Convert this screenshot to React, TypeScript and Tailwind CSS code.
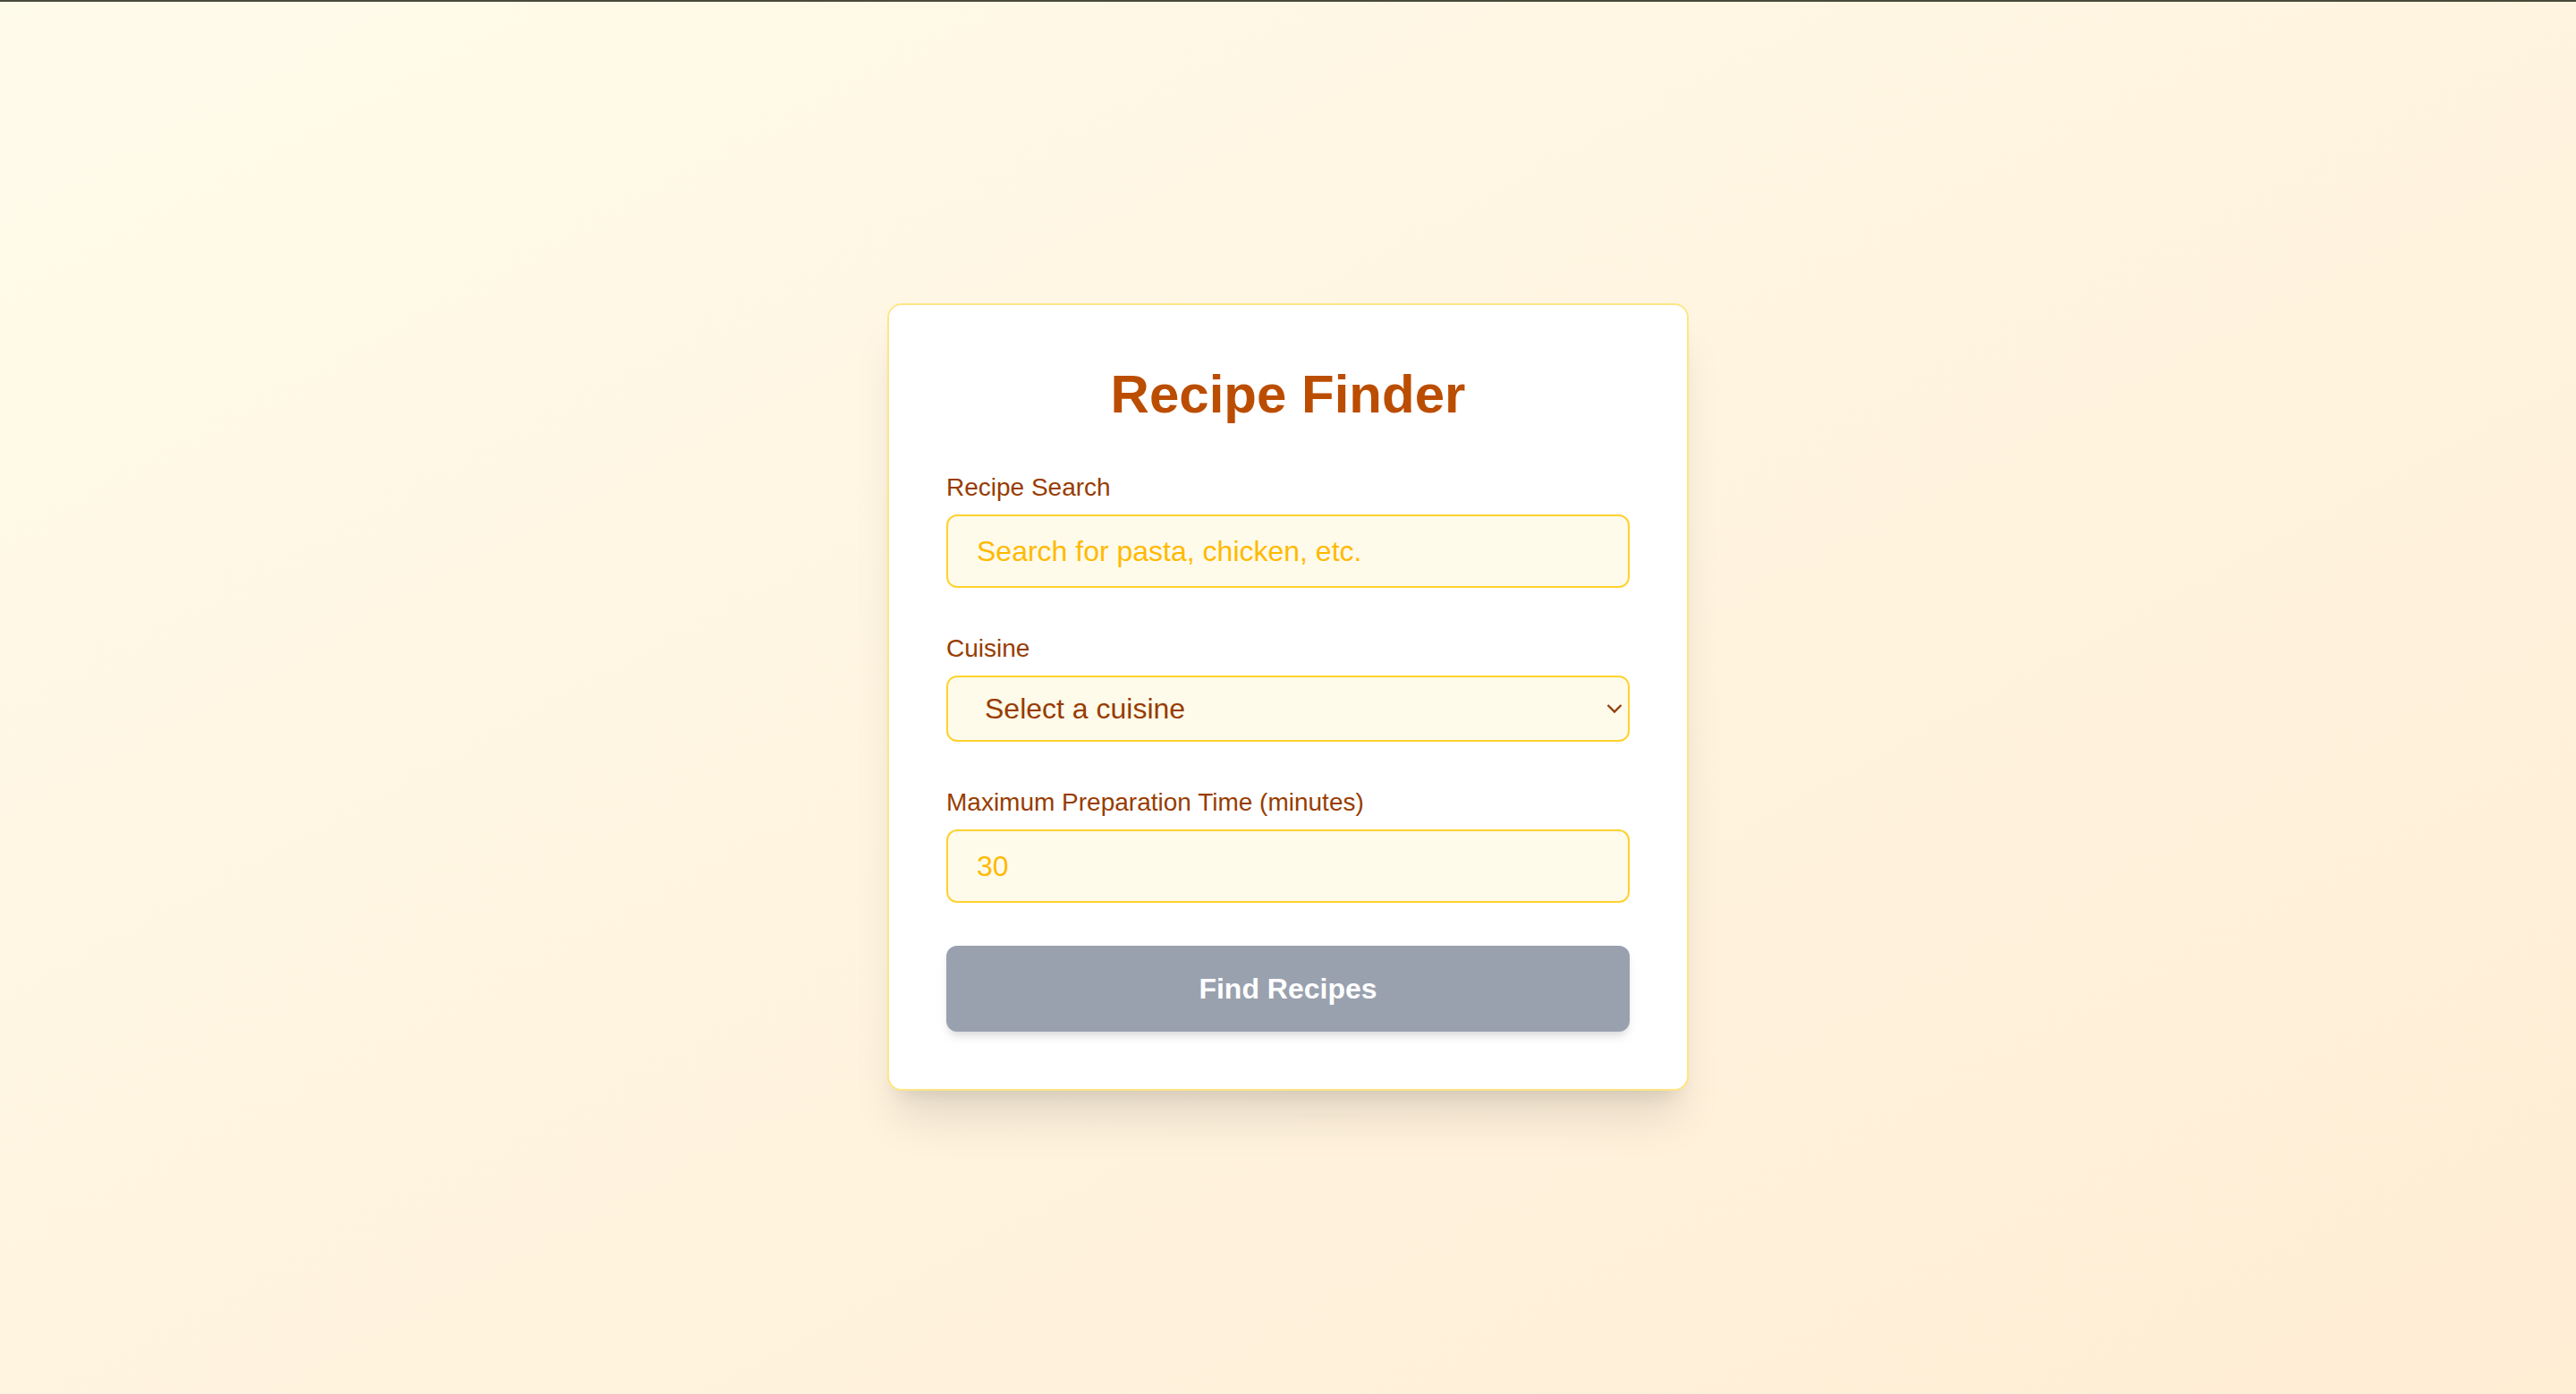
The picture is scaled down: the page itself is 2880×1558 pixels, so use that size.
import { useState } from "react";

const labelClass = "block text-[28px] leading-[40px] text-amber-800 mb-[10px]";
const fieldClass =
  "w-full border-2 border-amber-300 rounded-[12px] bg-amber-50 text-[32px] outline-none";

const ChevronDown = () => (
  <svg
    width="18"
    height="11"
    viewBox="0 0 18 11"
    fill="none"
    className="pointer-events-none absolute right-[8px] top-1/2 -translate-y-1/2"
  >
    <path d="M1.5 1.5 L9 9 L16.5 1.5" stroke="#92400e" strokeWidth="2.4" />
  </svg>
);

const App = () => {
  const [query, setQuery] = useState("");
  const [cuisine, setCuisine] = useState("");

  return (
    <div
      className="relative min-h-screen flex items-center justify-center bg-gradient-to-br from-amber-50 to-orange-100"
      style={{ fontFamily: '"Liberation Sans", Arial, Helvetica, sans-serif' }}
    >
      <div className="absolute top-0 left-0 w-full h-[2px] bg-[#4a4a3b]" />
      <div className="w-[896px] bg-white border-2 border-amber-200 rounded-[16px] p-[64px] shadow-[0_40px_50px_-10px_rgba(0,0,0,0.1),0_16px_20px_-12px_rgba(0,0,0,0.1)]">
        <h1 className="text-center text-[60px] leading-[72px] font-bold text-amber-700 mb-[48px]">
          Recipe Finder
        </h1>

        <div className="flex flex-col gap-[48px]">
          <div>
            <label className={labelClass}>Recipe Search</label>
            <input
              type="text"
              value={query}
              onChange={(e) => setQuery(e.target.value)}
              placeholder="Search for pasta, chicken, etc."
              className={`${fieldClass} h-[82px] px-[32px] text-amber-800 placeholder:text-amber-400`}
            />
          </div>

          <div>
            <label className={labelClass}>Cuisine</label>
            <div className="relative">
              <select
                value={cuisine}
                onChange={(e) => setCuisine(e.target.value)}
                className={`${fieldClass} appearance-none h-[74px] pl-[41px] pr-[40px] text-amber-800`}
              >
                <option value="">Select a cuisine</option>
                <option value="italian">Italian</option>
                <option value="mexican">Mexican</option>
                <option value="indian">Indian</option>
              </select>
              <ChevronDown />
            </div>
          </div>

          <div>
            <label className={labelClass}>Maximum Preparation Time (minutes)</label>
            <input
              type="number"
              placeholder="30"
              className={`${fieldClass} h-[82px] px-[32px] text-amber-800 placeholder:text-amber-400`}
            />
          </div>

          <button
            disabled
            className="w-full h-[96px] rounded-[12px] bg-gray-400 text-white text-[32px] font-bold shadow-[0_8px_12px_-2px_rgba(0,0,0,0.1),0_4px_8px_-4px_rgba(0,0,0,0.1)]"
          >
            Find Recipes
          </button>
        </div>
      </div>
    </div>
  );
};

export default App;
